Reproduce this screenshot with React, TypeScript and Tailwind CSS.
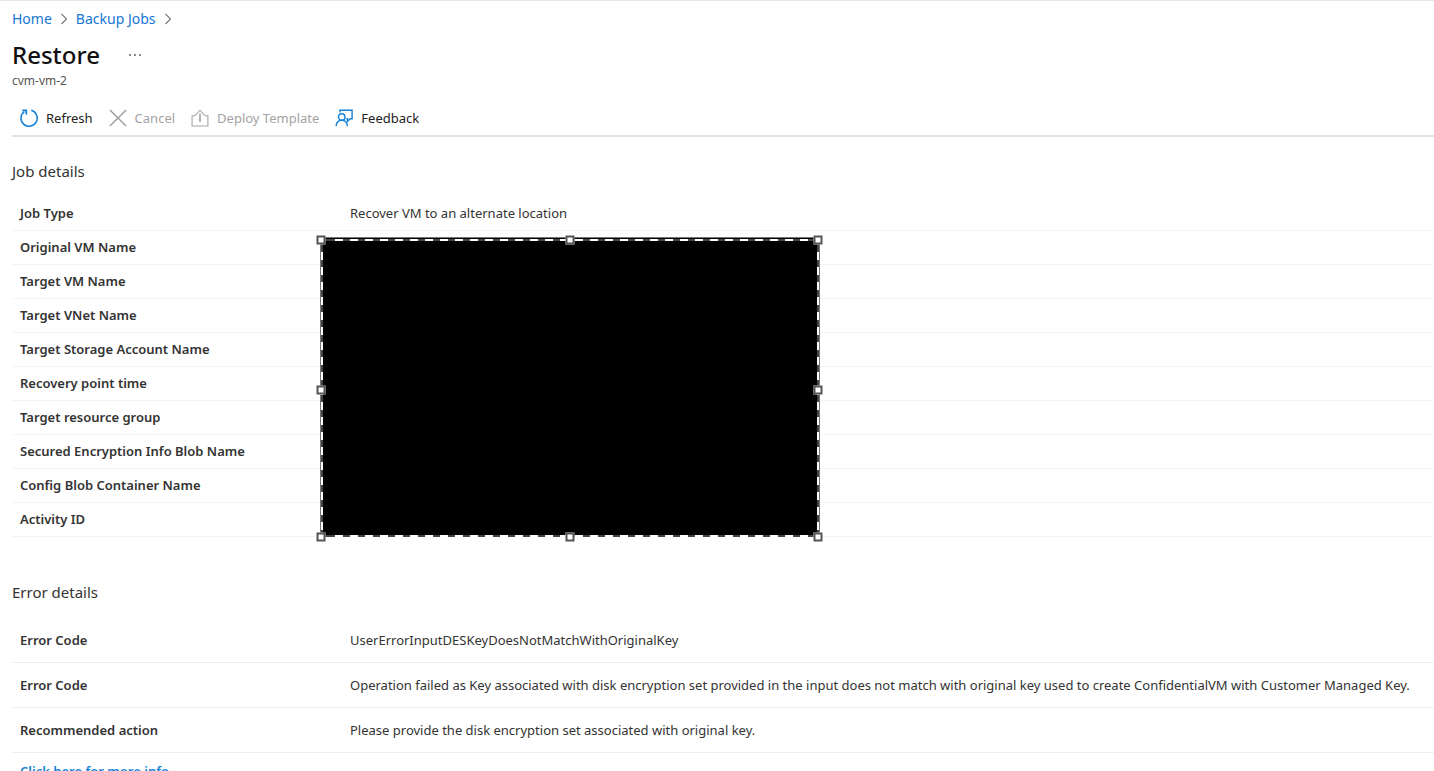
import React from "react";

const jobLabels = [
  "Original VM Name",
  "Target VM Name",
  "Target VNet Name",
  "Target Storage Account Name",
  "Recovery point time",
  "Target resource group",
  "Secured Encryption Info Blob Name",
  "Config Blob Container Name",
  "Activity ID",
];

const errors = [
  ["Error Code", "UserErrorInputDESKeyDoesNotMatchWithOriginalKey"],
  [
    "Error Code",
    "Operation failed as Key associated with disk encryption set provided in the input does not match with original key used to create ConfidentialVM with Customer Managed Key.",
  ],
  ["Recommended action", "Please provide the disk encryption set associated with original key."],
];

function Chevron() {
  return (
    <svg width="8" height="12" viewBox="0 0 8 12" fill="none" stroke="#777" strokeWidth="1.1" aria-hidden="true">
      <path d="M1.5 1 6.5 6l-5 5" />
    </svg>
  );
}

function RefreshIcon() {
  return (
    <svg width="20" height="20" viewBox="0 0 20 20" fill="none" stroke="#1683d8" strokeWidth="1.7" aria-hidden="true">
      <path d="M12.500 1.500a9 9 0 1 1-7.800 1.500" />
      <path d="M2.500 1.500h4.500v4.500" strokeWidth="2" />
    </svg>
  );
}

function CancelIcon() {
  return (
    <svg width="20" height="20" viewBox="0 0 20 20" fill="none" stroke="#9a9a9a" strokeWidth="1.5" aria-hidden="true">
      <path d="M1 1l18 18M19 1l-18 18" />
    </svg>
  );
}

function DeployIcon() {
  return (
    <svg width="20" height="20" viewBox="0 0 20 20" fill="none" stroke="#a3a3a3" strokeWidth="1.2" aria-hidden="true">
      <path d="M4.500 7.500H1.200v11.300h17.600V7.500h-3.300M4.500 7.500 10 1.400l5.500 6.100" />
      <path d="M10 5v9.500" strokeWidth="1.800" />
    </svg>
  );
}

function FeedbackIcon() {
  return (
    <svg width="20" height="20" viewBox="0 0 20 20" fill="none" stroke="#1683d8" strokeWidth="1.6" aria-hidden="true">
      <path d="M5.500 4V1.300h13.500v9.500h-2.200l-3 3v-3h-1.200" />
      <circle cx="7.500" cy="8.800" r="3.600" />
      <path d="M1.200 19c.3-4.200 2.700-6.600 6.300-6.600s6 2.400 6.300 6.600" />
    </svg>
  );
}

function Command({ icon, label, disabled }: { icon: React.ReactNode; label: string; disabled?: boolean }) {
  return (
    <button type="button" disabled={disabled} className="flex items-center gap-2 text-[#222] disabled:text-[#a3a3a3]">
      <span className="[&>svg]:size-[18px]">{icon}</span>
      {label}
    </button>
  );
}

function Selection() {
  const handle = "absolute size-[9px] -translate-x-1/2 -translate-y-1/2 border-2 border-[#555] bg-white";
  return (
    <div className="absolute top-[41px] left-[308px] h-[300px] w-[500px] bg-black">
      <svg className="absolute inset-0 size-full" fill="none" aria-hidden="true">
        <path d="M0 .5H500M.5 0V300M499.500 0V300" stroke="#777" />
        <path d="M1 3H499M2 3V299M498 3V299M2 299H499" stroke="#444" strokeWidth="2" />
        <path d="M15 3H499M15 299H499" stroke="#fff" strokeWidth="2" strokeDasharray="8 7" />
        <path d="M2 15V299M498 15V299" stroke="#fff" strokeWidth="2" strokeDasharray="8 7" />
      </svg>
      <span className={`${handle} top-[3px] left-px`} />
      <span className={`${handle} top-[3px] left-1/2`} />
      <span className={`${handle} top-[3px] left-[498px]`} />
      <span className={`${handle} top-[153px] left-px`} />
      <span className={`${handle} top-[153px] left-[498px]`} />
      <span className={`${handle} top-full left-px`} />
      <span className={`${handle} top-full left-1/2`} />
      <span className={`${handle} top-full left-[498px]`} />
    </div>
  );
}

export default function App() {
  return (
    <main className="h-screen overflow-hidden border-t border-[#e8e8e8] bg-white pl-3 font-['Noto_Sans','Open_Sans',sans-serif] text-[13px] leading-5 text-[#333]">
      <nav aria-label="Breadcrumb" className="flex h-9 items-center gap-2 text-sm text-[#1677d2]">
        <a href="#home">Home</a>
        <Chevron />
        <a href="#jobs">Backup Jobs</a>
        <Chevron />
      </nav>
      <header>
        <div className="flex h-9 items-center gap-7">
          <h1 className="text-2xl font-medium text-[#111]">Restore</h1>
          <button type="button" aria-label="More options">
            <svg width="14" height="4" viewBox="0 0 14 4" fill="#666" aria-hidden="true">
              <circle cx="2" cy="2" r="1" />
              <circle cx="7" cy="2" r="1" />
              <circle cx="12" cy="2" r="1" />
            </svg>
          </button>
        </div>
        <p className="h-6 text-xs leading-4 text-[#555]">cvm-vm-2</p>
      </header>
      <div className="flex h-10 items-center gap-4 border-b-2 border-[#e3e3e3] pt-1 pl-2">
        <Command icon={<RefreshIcon />} label="Refresh" />
        <Command icon={<CancelIcon />} label="Cancel" disabled />
        <Command icon={<DeployIcon />} label="Deploy Template" disabled />
        <Command icon={<FeedbackIcon />} label="Feedback" />
      </div>

      <section className="pt-6">
        <h2 className="text-[15px]">Job details</h2>
        <div className="relative mt-[15px]">
          <table className="w-full table-fixed border-collapse text-left">
            <tbody>
              <tr className="h-[34px] border-b border-[#f4f4f4]">
                <th className="w-[338px] pl-2 font-semibold text-[#333]">Job Type</th>
                <td>Recover VM to an alternate location</td>
              </tr>
              {jobLabels.map((label) => (
                <tr key={label} className="h-[34px] border-b border-[#f4f4f4]">
                  <th className="pl-2 font-semibold text-[#333]">{label}</th>
                  <td />
                </tr>
              ))}
            </tbody>
          </table>
          <Selection />
        </div>
      </section>

      <section className="pt-[45px]">
        <h2 className="text-[15px]">Error details</h2>
        <table className="mt-4 w-full table-fixed border-collapse text-left">
          <tbody>
            {errors.map(([label, value]) => (
              <tr key={value} className="h-[45px] border-b border-[#efefef]">
                <th className="w-[338px] pl-2 font-semibold text-[#333]">{label}</th>
                <td className="whitespace-nowrap">{value}</td>
              </tr>
            ))}
          </tbody>
        </table>
        <a href="#info" className="mt-2 block pl-2 font-semibold text-[#1683d8]">
          Click here for more info
        </a>
      </section>
    </main>
  );
}
